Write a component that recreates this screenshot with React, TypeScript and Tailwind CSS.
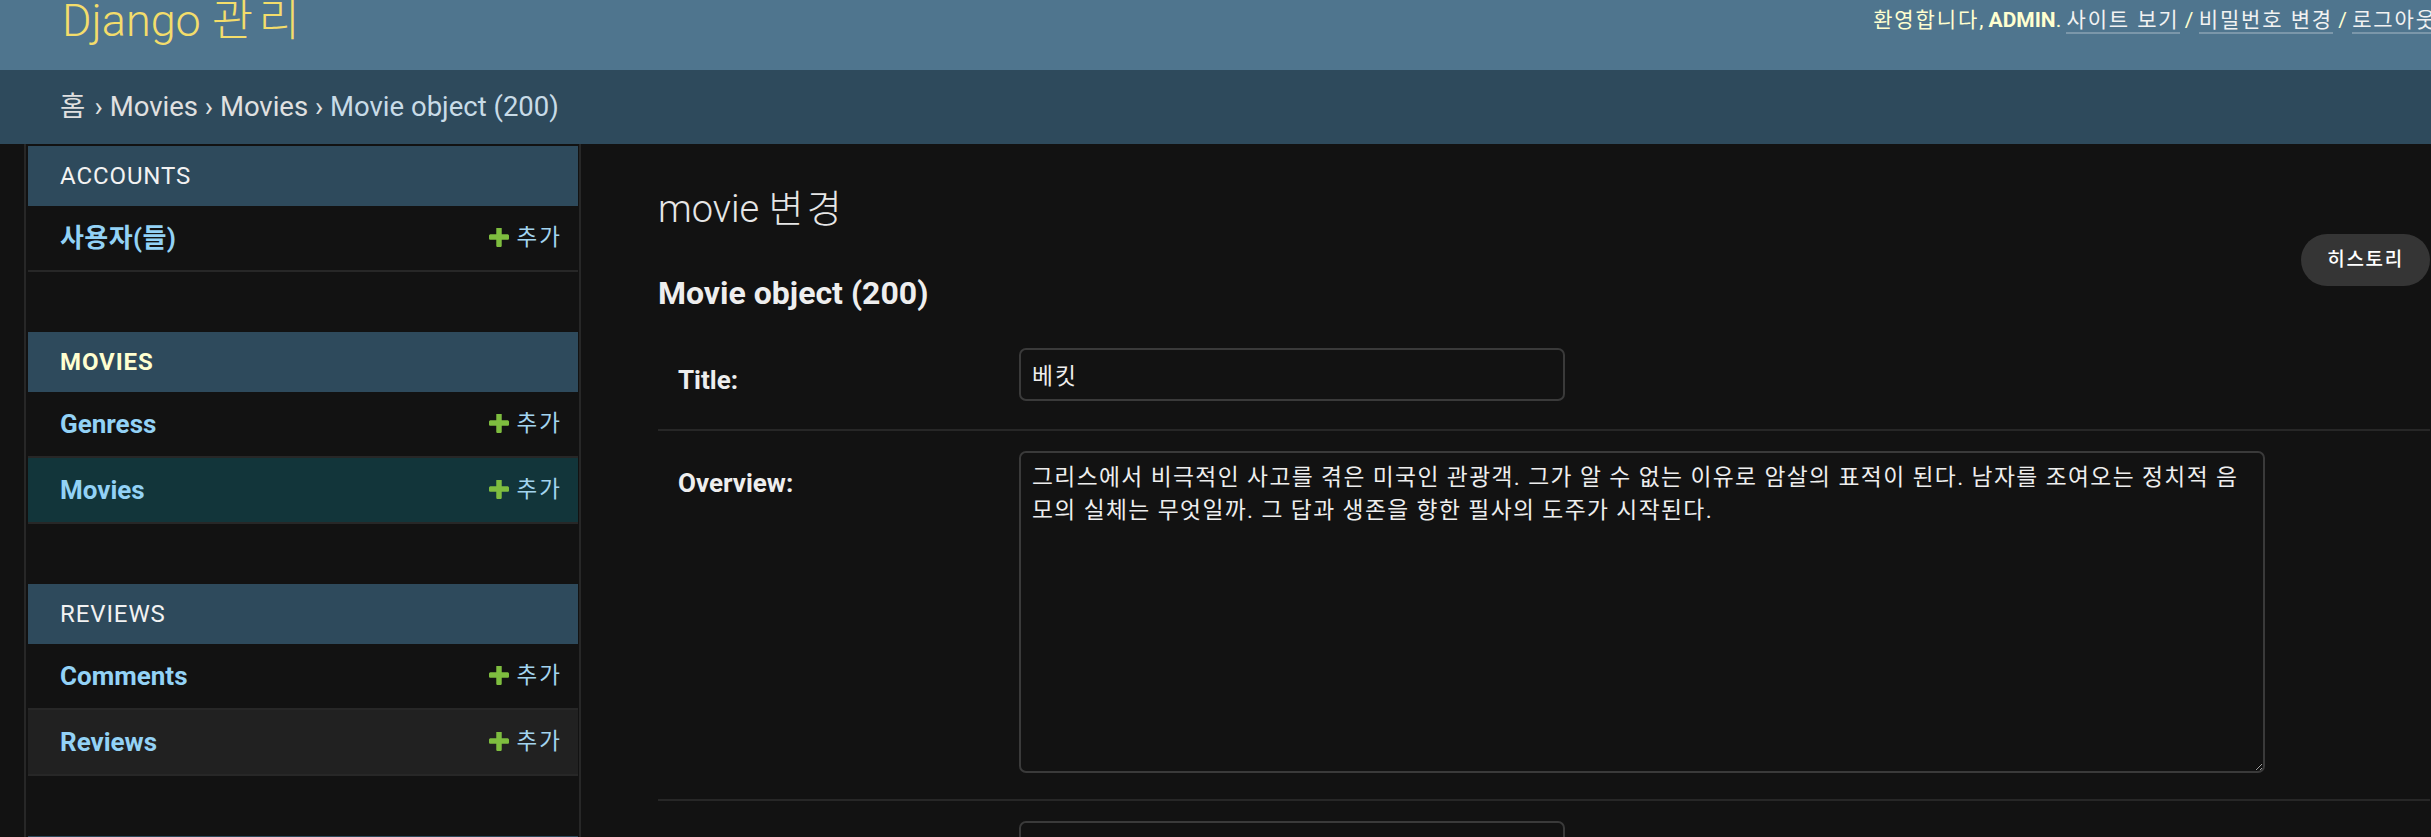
import React from "react";

type Model = { name: string; selected?: boolean; hovered?: boolean };
type AppModule = { label: string; current?: boolean; models: Model[] };

const modules: AppModule[] = [
  { label: "Accounts", models: [{ name: "사용자(들)" }] },
  {
    label: "Movies",
    current: true,
    models: [{ name: "Genress" }, { name: "Movies", selected: true }],
  },
  {
    label: "Reviews",
    models: [{ name: "Comments" }, { name: "Reviews", hovered: true }],
  },
  { label: "Sites", models: [{ name: "Sites" }] },
];

// hangul in the reference sets wider than Noto CJK, so korean runs get a bit of tracking
function K({ children }: { children: React.ReactNode }) {
  return <span className="tracking-[0.09em]">{children}</span>;
}

function AddIcon() {
  return (
    <svg width="20" height="20" viewBox="192 192 1408 1408" aria-hidden="true">
      <path
        fill="#7ebd3f"
        d="M1600 736v192q0 40-28 68t-68 28h-416v416q0 40-28 68t-68 28h-192q-40 0-68-28t-28-68v-416h-416q-40 0-68-28t-28-68v-192q0-40 28-68t68-28h416v-416q0-40 28-68t68-28h192q40 0 68 28t28 68v416h416q40 0 68 28t28 68z"
      />
    </svg>
  );
}

function NavSidebar() {
  return (
    <nav className="w-[555px] shrink-0 border-r-2 border-[#272727] pl-[2px] pr-[1px] pt-[2px]">
      {modules.map((mod) => (
        <div key={mod.label} className="mb-[60px]">
          <div
            className={
              mod.current
                ? "flex h-[60px] items-center bg-[#2e4a5c] pl-[32px] text-[24px] font-bold uppercase tracking-[0.9px] text-[#ffffd0]"
                : "flex h-[60px] items-center bg-[#2e4a5c] pl-[32px] text-[24px] uppercase tracking-[0.9px] text-[#f2f2f2]"
            }
          >
            {mod.label}
          </div>
          {mod.models.map((model) => (
            <div
              key={model.name}
              className={
                model.selected
                  ? "flex h-[66px] items-center justify-between border-b-2 border-[#272727] bg-[#12353a] pl-[32px] pr-[16px]"
                  : model.hovered
                    ? "flex h-[66px] items-center justify-between border-b-2 border-[#272727] bg-[#212121] pl-[32px] pr-[16px]"
                    : "flex h-[66px] items-center justify-between border-b-2 border-[#272727] pl-[32px] pr-[16px]"
              }
            >
              <a
                className={
                  /[가-힣]/.test(model.name)
                    ? "text-[26px] font-bold tracking-[0.4px] text-[#93d2f6]"
                    : "text-[26px] font-bold text-[#93d2f6]"
                }
              >
                {model.name}
              </a>
              <a className="flex items-center gap-[8px] text-[22.5px] tracking-[2px] text-[#a3d4ef]">
                <AddIcon />
                추가
              </a>
            </div>
          ))}
        </div>
      ))}
    </nav>
  );
}

function FormRow({
  label,
  children,
  last,
}: {
  label: string;
  children: React.ReactNode;
  last?: string;
}) {
  return (
    <div className={`flex border-b-2 border-[#272727] pl-[20px] pt-[20px] ${last ?? "pb-[28px]"}`}>
      <label className="w-[341px] shrink-0 pt-[19px] text-[26px] font-bold leading-none text-[#eeeeee]">
        {label}
      </label>
      {children}
    </div>
  );
}

export default function App() {
  return (
    <div className="min-h-screen w-full overflow-hidden bg-[#121212] font-[Roboto,'Noto_Sans_CJK_KR',sans-serif] text-[#eeeeee]">
      <header className="flex h-[70px] items-start justify-between bg-[#4f758e] pl-[62px]">
        <div className="-mt-[2px] text-[45px] font-light leading-none text-[#f3dd6b]">
          Django <span className="tracking-[0.12em]">관리</span>
        </div>
        <div className="-mr-[6px] whitespace-nowrap pt-[8px] text-[21px] leading-[24px] text-[#ffffd0]">
          <K>환영합니다</K>, <strong className="font-bold">ADMIN</strong>.{" "}
          <a className="border-b-2 border-white/25 text-[#f2f2f2]">
            <K>사이트 보기</K>
          </a>{" "}
          /{" "}
          <a className="border-b-2 border-white/25 text-[#f2f2f2]">
            <K>비밀번호 변경</K>
          </a>{" "}
          /{" "}
          <a className="border-b-2 border-white/25 text-[#f2f2f2]">
            <K>로그아웃</K>
          </a>
        </div>
      </header>

      <div className="flex h-[74px] items-center bg-[#2e4a5c] pl-[60px] text-[27.5px] text-[#e0e0e0]">
        <a>
          <K>홈</K>
        </a>
        &nbsp;›&nbsp;<a>Movies</a>&nbsp;›&nbsp;<a>Movies</a>&nbsp;›&nbsp;
        <span className="text-[#c8dbe7]">Movie object (200)</span>
      </div>

      <div className="flex">
        <div className="w-[26px] shrink-0 border-r-2 border-[#272727]" />
        <NavSidebar />

        <main className="min-w-0 flex-1 pl-[77px] pr-[1px] pt-[42px]">
          <div className="flex items-start justify-between">
            <div>
              <h1 className="text-[38px] font-light leading-[46px] text-[#e6e6e6]">
                movie <K>변경</K>
              </h1>
              <h2 className="mt-[42px] text-[32px] font-bold leading-[38px] text-[#eeeeee]">
                Movie object (200)
              </h2>
            </div>
            <a className="mt-[48px] flex h-[52px] items-center rounded-full bg-[#353535] px-[26px] text-[19px] font-medium tracking-[0.09em] text-white">
              히스토리
            </a>
          </div>

          <div className="mt-[16px]">
            <FormRow label="Title:">
              <input
                readOnly
                defaultValue="베킷"
                className="h-[53px] w-[546px] rounded-[7px] border-2 border-[#3a3a3a] bg-transparent px-[11px] text-[22.75px] tracking-[0.09em] text-[#eeeeee] outline-none"
              />
            </FormRow>
            <FormRow label="Overview:" last="pb-[26px]">
              <textarea
                readOnly
                defaultValue="그리스에서 비극적인 사고를 겪은 미국인 관광객. 그가 알 수 없는 이유로 암살의 표적이 된다. 남자를 조여오는 정치적 음모의 실체는 무엇일까. 그 답과 생존을 향한 필사의 도주가 시작된다."
                className="h-[322px] w-[1246px] rounded-[7px] border-2 border-[#3a3a3a] bg-transparent px-[11px] py-[8px] text-[22.75px] leading-[33px] tracking-[1.4px] text-[#eeeeee] outline-none [color-scheme:dark]"
              />
            </FormRow>
            <FormRow label="Original title:">
              <input
                readOnly
                defaultValue="Beckett"
                className="h-[53px] w-[546px] rounded-[7px] border-2 border-[#3a3a3a] bg-transparent px-[11px] text-[22.75px] text-[#eeeeee] outline-none"
              />
            </FormRow>
          </div>
        </main>
      </div>
    </div>
  );
}
